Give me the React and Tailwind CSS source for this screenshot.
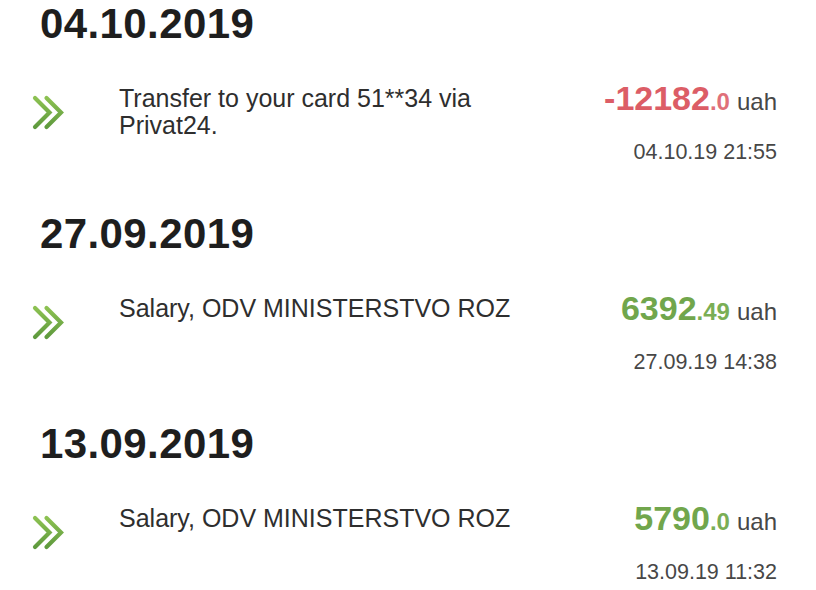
import React from "react";

const items = [
  {
    date: "04.10.2019",
    desc: "Transfer to your card 51**34 via Privat24.",
    whole: "-12182",
    dec: ".0",
    neg: true,
    time: "04.10.19 21:55",
  },
  {
    date: "27.09.2019",
    desc: "Salary, ODV MINISTERSTVO ROZ",
    whole: "6392",
    dec: ".49",
    neg: false,
    time: "27.09.19 14:38",
  },
  {
    date: "13.09.2019",
    desc: "Salary, ODV MINISTERSTVO ROZ",
    whole: "5790",
    dec: ".0",
    neg: false,
    time: "13.09.19 11:32",
  },
];

function Chevrons() {
  return (
    <svg width="33" height="35" viewBox="0 0 33 35" fill="none">
      <defs>
        <linearGradient id="cg" x1="0" y1="0" x2="0" y2="1">
          <stop offset="0" stopColor="#8cc152" />
          <stop offset="1" stopColor="#5f9a3e" />
        </linearGradient>
      </defs>
      <path d="M3 3 L17.5 17.5 L3 32" stroke="url(#cg)" strokeWidth="4.2" strokeLinecap="round" strokeLinejoin="miter" />
      <path d="M14.5 3 L29 17.5 L14.5 32" stroke="url(#cg)" strokeWidth="4.2" strokeLinecap="round" strokeLinejoin="miter" />
    </svg>
  );
}

export default function App() {
  return (
    <div
      className="w-[816px] h-[590px] bg-white overflow-hidden"
      style={{ fontFamily: '"Liberation Sans", Arial, sans-serif' }}
    >
      {items.map((it, i) => (
        <div key={i} className="h-[210px] flex flex-col">
          <div className="h-[80px] pl-[40px]">
            <div className="text-[42px] leading-[47px] font-bold tracking-[0.4px] text-[#1e1e1e]">
              {it.date}
            </div>
          </div>
          <div className="flex pr-[39px]">
            <div className="w-[119px] pl-[32px] pt-[15px] shrink-0">
              <Chevrons />
            </div>
            <div className="w-[420px] pt-[5px] text-[25px] leading-[27px] text-[#2e2e2e]">
              {it.desc}
            </div>
            <div className="flex-1" />
            <div className="flex flex-col items-end">
              <div className="flex items-baseline h-[36px] leading-[36px]">
                <span
                  className={
                    "text-[34px] font-bold " +
                    (it.neg ? "text-[#dc5d66]" : "text-[#71a64c]")
                  }
                >
                  {it.whole}
                </span>
                <span
                  className={
                    "text-[24px] font-bold " +
                    (it.neg ? "text-[#e0707a]" : "text-[#7aae55]")
                  }
                >
                  {it.dec}
                </span>
                <span className="text-[24px] text-[#474747] ml-[7px]">uah</span>
              </div>
              <div className="mt-[24px] text-[21.5px] leading-[24px] text-[#474747]">
                {it.time}
              </div>
            </div>
          </div>
        </div>
      ))}
    </div>
  );
}
